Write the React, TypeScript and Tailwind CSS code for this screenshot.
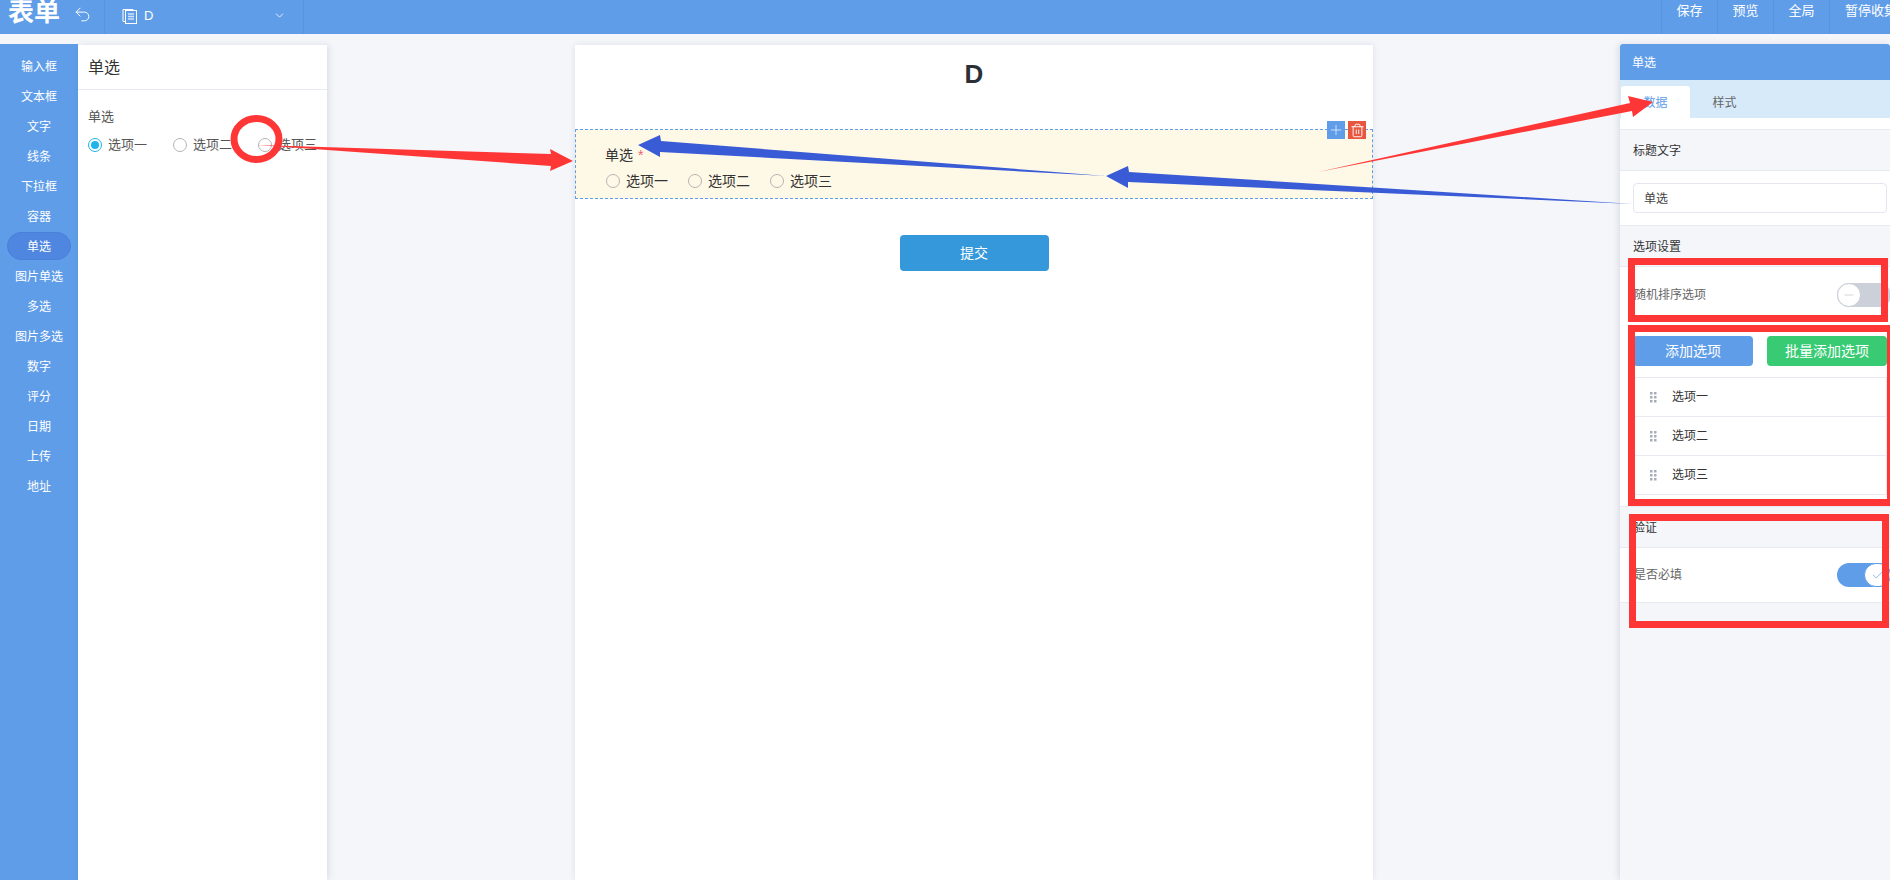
import React from 'react';
import { Plus, Trash2, Undo2, ChevronDown, Check, Minus } from 'lucide-react';

const FONT = "font-['Liberation_Sans','Noto_Sans_CJK_SC',sans-serif]";

const widgets = ['输入框', '文本框', '文字', '线条', '下拉框', '容器', '单选', '图片单选', '多选', '图片多选', '数字', '评分', '日期', '上传', '地址'];
const options = ['选项一', '选项二', '选项三'];
const actions = ['保存', '预览', '全局', '暂停收集'];

const Radio = ({ on }: { on?: boolean }) => (
  <span className={`w-[14px] h-[14px] rounded-full border flex items-center justify-center shrink-0 bg-transparent ${on ? 'border-[#1eb4ea]' : 'border-[#b4b4b4]'}`}>
    {on && <span className="w-[8px] h-[8px] rounded-full bg-[#1eb4ea]"></span>}
  </span>
);

const SectionTitle = ({ text }: { text: string }) => (
  <div className="h-[41px] flex items-center pl-[13px] pt-[2px] text-[12px] text-[#333] border-b border-[#e8eaf1]">{text}</div>
);

const Grip = () => (
  <svg width="7" height="11" viewBox="0 0 7 11" fill="#a6adba" className="shrink-0">
    <rect x="0" y="0" width="2.500" height="2.500" />
    <rect x="4" y="0" width="2.500" height="2.500" />
    <rect x="0" y="4" width="2.500" height="2.500" />
    <rect x="4" y="4" width="2.500" height="2.500" />
    <rect x="0" y="8" width="2.500" height="2.500" />
    <rect x="4" y="8" width="2.500" height="2.500" />
  </svg>
);

// arrows and the red box marks someone drew over the screenshot
const Annotations = () => (
  <svg className="absolute inset-0 pointer-events-none" width="1890" height="880" viewBox="0 0 1890 880">
    <ellipse cx="256.5" cy="139" rx="22.5" ry="20.5" fill="none" stroke="#ff3636" strokeWidth="7" />
    <polygon points="257,145 551,154 550,149 573,161 550,171 551,166" fill="#ff3636" />
    <polygon points="1318,172 1630,103 1628,96 1653,102 1633,117 1632,111" fill="#ff3636" />
    <polygon points="1106,176 1128,166 1129,172 1633,204 1128,182 1128,188" fill="#3a5bd6" />
    <polygon points="638,145 660,135 661,141 1106,176 660,152 660,157" fill="#3a5bd6" />
    <rect x="1631.5" y="261.5" width="253" height="57" fill="none" stroke="#ff3636" strokeWidth="7" />
    <rect x="1631.5" y="328.5" width="259" height="174" fill="none" stroke="#ff3636" strokeWidth="7" />
    <rect x="1632.5" y="517.5" width="253" height="107" fill="none" stroke="#ff3636" strokeWidth="7" />
  </svg>
);

export default function App() {
  return (
    <div className={`relative w-[1890px] h-[880px] overflow-hidden bg-[#f5f6fa] flex flex-col ${FONT}`}>
      <header className="h-[34px] shrink-0 bg-[#5f9de9] flex items-center text-white">
        <div className="w-[104px] flex items-center shrink-0">
          <span className="ml-[8px] text-[26px] font-bold leading-none -mt-[10px]">表单</span>
          <Undo2 className="ml-[13px] w-[19px] h-[19px] -mt-[5px]" strokeWidth={1.25} />
        </div>
        <div className="w-[200px] h-full border-l border-r border-[#5a94e0] flex items-center pl-[17px] shrink-0">
          <svg width="15" height="16" viewBox="0 0 15 16" fill="none" stroke="#fff" strokeWidth="1" className="-mt-[3px]">
            <rect x="3.500" y="2.500" width="11" height="13" />
            <path d="M3 13.500H1V1.500H11V2.500" />
            <path d="M6 6h6M6 8.500h6M6 11h6" stroke="#cfe2f9" strokeWidth="1.500" />
          </svg>
          <span className="ml-[7px] text-[13px] -mt-[2px]">D</span>
          <ChevronDown className="ml-auto mr-[17px] w-[13px] h-[13px] -mt-[4px]" strokeWidth={1.5} />
        </div>
        <div className="ml-auto flex h-full">
          {actions.map((a) => (
            <div key={a} className="w-[56px] border-l border-[#5a94e0] flex justify-center pt-[3px] text-[13px] text-white whitespace-nowrap leading-[16px] last:w-[61px] last:justify-start last:pl-[15px]">
              {a}
            </div>
          ))}
        </div>
      </header>

      <div className="flex-1 flex items-stretch pt-[10px] min-h-0">
        <nav className="w-[78px] shrink-0 bg-[#5f9de9] pt-[7px] flex flex-col items-center">
          {widgets.map((w) =>
            w === '单选' ? (
              <div key={w} className="w-[64px] h-[28px] my-[1px] shrink-0 flex items-center justify-center pt-[1px] text-[12px] text-white rounded-full bg-[#4f86e0] border border-[#4a80d8]">
                {w}
              </div>
            ) : (
              <div key={w} className="w-[64px] h-[30px] shrink-0 flex items-center justify-center pt-[2px] text-[12px] text-white">
                {w}
              </div>
            ),
          )}
        </nav>

        <aside className="w-[249px] shrink-0 bg-white mt-[1px] shadow-[2px_0_6px_rgba(40,60,110,0.12)]">
          <div className="h-[45px] border-b border-[#e8eaf1] flex items-center pl-[10px] pt-[2px] text-[16px] text-[#333]">单选</div>
          <div className="pt-[17px] pl-[10px]">
            <div className="text-[13px] text-[#555] leading-[20px]">单选</div>
            <div className="flex mt-[8px] text-[13px] text-[#555] leading-[20px]">
              {options.map((o, i) => (
                <div key={o} className="flex items-center w-[85px] shrink-0 gap-[6px]">
                  <Radio on={i === 0} />
                  <span>{o}</span>
                </div>
              ))}
            </div>
          </div>
        </aside>

        <main className="flex-1 flex justify-center pl-[1px] pr-[1px]">
          <div className="relative w-[798px] mt-[1px] ml-[1px] bg-white shadow-[0_0_6px_rgba(40,60,110,0.12)]">
            <h1 className="text-center text-[26px] font-bold text-[#2b2f36] leading-[28px] pt-[15px] h-[84px]">D</h1>
            <div className="relative h-[70px] bg-[#fef9e7] border border-dashed border-[#5f9de9] pl-[30px] pt-[15px]">
              <div className="-ml-[1px] text-[14px] text-[#333] leading-[20px]">
                单选 <span className="ml-[1px] text-[#f0616d] text-[14px] align-top">*</span>
              </div>
              <div className="flex mt-[6px] text-[14px] text-[#333] leading-[20px]">
                {options.map((o) => (
                  <div key={o} className="flex items-center w-[82px] gap-[6px]">
                    <Radio />
                    <span>{o}</span>
                  </div>
                ))}
              </div>
              <div className="absolute right-[6px] -top-[9px] flex gap-[3px]">
                <span className="w-[18px] h-[18px] bg-[#5f9de9] flex items-center justify-center">
                  <Plus className="w-[16px] h-[16px] text-white" strokeWidth={1} />
                </span>
                <span className="w-[18px] h-[18px] bg-[#e7563f] flex items-center justify-center">
                  <Trash2 className="w-[15px] h-[15px] text-white" strokeWidth={1.5} />
                </span>
              </div>
            </div>
            <div className="flex justify-center mt-[36px]">
              <button className="w-[149px] h-[36px] bg-[#3498db] rounded-[4px] text-white text-[14px]">提交</button>
            </div>
          </div>
        </main>

        <aside className="w-[270px] shrink-0 shadow-[-2px_0_6px_rgba(40,60,110,0.12)]">
          <div className="h-[36px] bg-[#5f9de9] rounded-t-[3px] flex items-center pl-[12px] pt-[2px] text-[12px] text-white">单选</div>
          <div className="h-[38px] bg-[#d6eafa] flex items-end pl-[1px] text-[12px]">
            <div className="w-[69px] h-[32px] bg-white rounded-t-[3px] flex items-center justify-center pt-[2px] text-[#5f9de9]">数据</div>
            <div className="w-[69px] h-[32px] flex items-center justify-center pt-[2px] text-[#666]">样式</div>
          </div>
          <div className="h-[12px] bg-white border-b border-[#e8eaf1]"></div>
          <SectionTitle text="标题文字" />
          <div className="h-[55px] bg-white border-b border-[#e8eaf1] pl-[13px] pr-[3px] pt-[12px]">
            <div className="h-[30px] border border-[#e4e7ef] rounded-[4px] flex items-center pl-[10px] pt-[1px] text-[12px] text-[#444]">单选</div>
          </div>
          <SectionTitle text="选项设置" />
          <div className="h-[55px] bg-white flex items-center justify-between pl-[14px] text-[12px] text-[#666]">
            <span>随机排序选项</span>
            <span className="relative w-[54px] h-[24px] mr-[-1px] rounded-full bg-[#ccd0d8]">
              <span className="absolute left-0 top-0 w-[24px] h-[24px] rounded-full bg-white border border-[#c8ccd6] flex items-center justify-center">
                <Minus className="w-[14px] h-[14px] text-[#ccd0d8]" strokeWidth={1.5} />
              </span>
            </span>
          </div>
          <div className="bg-white h-[185px] pl-[13px] pr-[3px] pt-[14px] border-b border-[#e8eaf1]">
            <div className="flex justify-between">
              <button className="w-[120px] h-[30px] bg-[#5f9de9] rounded-[4px] text-white text-[14px]">添加选项</button>
              <button className="w-[120px] h-[30px] bg-[#38cb74] rounded-[4px] text-white text-[14px]">批量添加选项</button>
            </div>
            <ul className="mt-[11px] border-t border-r border-[#e8eaf1]">
              {options.map((o) => (
                <li key={o} className="h-[39px] border-b border-[#e8eaf1] flex items-center pl-[17px] text-[12px] text-[#333]">
                  <Grip />
                  <span className="ml-[15px]">{o}</span>
                </li>
              ))}
            </ul>
          </div>
          <SectionTitle text="验证" />
          <div className="h-[55px] bg-white border-b border-[#e8eaf1] flex items-center justify-between pl-[14px] text-[12px] text-[#666]">
            <span>是否必填</span>
            <span className="relative w-[54px] h-[24px] mr-[-1px] rounded-full bg-[#5f9de9]">
              <span className="absolute right-0 top-0 w-[27px] h-[24px] rounded-full bg-white border border-[#5f9de9] flex items-center justify-center">
                <Check className="w-[14px] h-[14px] text-[#5f9de9]" strokeWidth={1.25} />
              </span>
            </span>
          </div>
        </aside>
      </div>

      <Annotations />
    </div>
  );
}
